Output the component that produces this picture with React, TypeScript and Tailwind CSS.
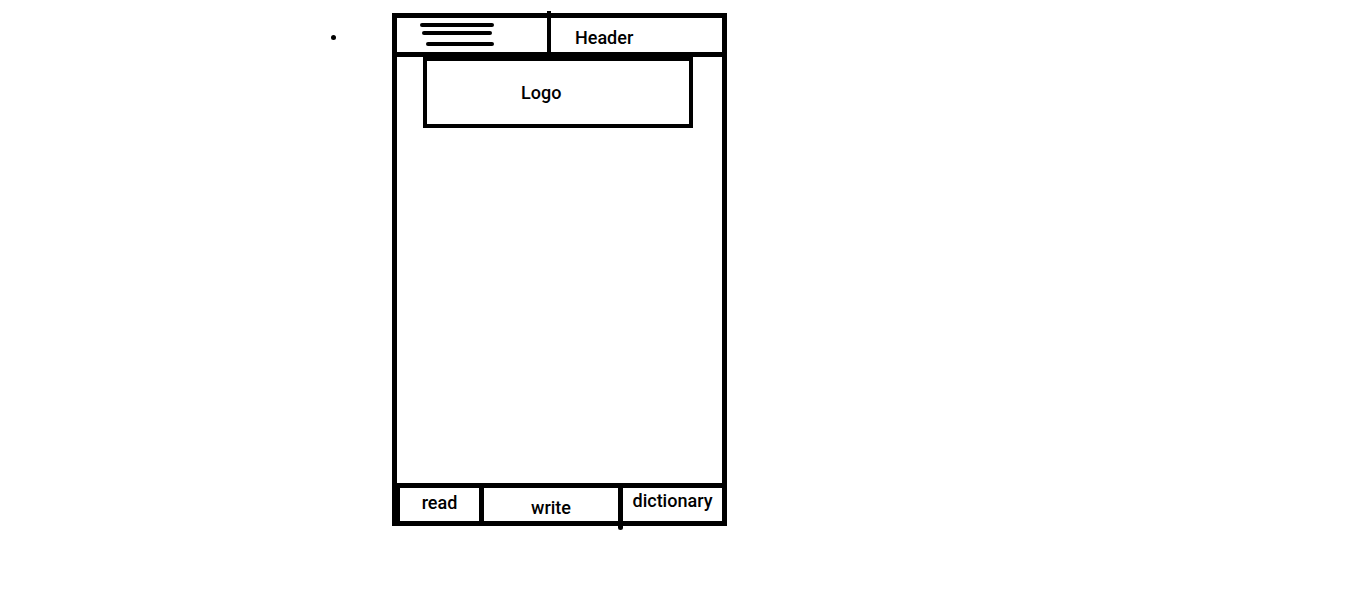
import React from "react";

const NavCell = ({ label, className }: { label: string; className: string }) => (
    <div className={"flex justify-center " + className}>
        <span>{label}</span>
    </div>
);

export default function App() {
    return (
        <div className="h-[612px] w-[1352px] bg-white text-black font-['Roboto',sans-serif] font-medium text-[18px] leading-none">
            <div className="flex pt-[13px]">
                <div className="ml-[331px] mt-[22px] h-[5px] w-[5px] rounded-full bg-black" />

                <div className="ml-[56px] flex h-[513px] w-[335px] flex-col border-[5px] border-black">
                    {/* header */}
                    <div className="flex h-[39px] border-b-[5px] border-black">
                        <div className="w-[150px]">
                            <svg width="80" height="30" viewBox="0 0 80 30" className="ml-[21px] mt-[3px]">
                                <g stroke="black" strokeWidth="4" strokeLinecap="round">
                                    <line x1="4" y1="4" x2="74" y2="4" />
                                    <line x1="6" y1="12" x2="72" y2="12" />
                                    <line x1="10" y1="23" x2="74" y2="23" />
                                </g>
                            </svg>
                        </div>
                        <div className="-mt-[7px] w-[4px] bg-black" />
                        <div className="flex-1 pl-[24px] pt-[11px]">Header</div>
                    </div>

                    {/* body */}
                    <div className="flex-1">
                        <div className="ml-[26px] flex h-[71px] w-[270px] items-center border-4 border-black pl-[94px]">
                            Logo
                        </div>
                    </div>

                    {/* bottom nav */}
                    <div className="flex h-[38px] border-t-[5px] border-black">
                        <NavCell label="read" className="w-[82px] border-l-[3px] border-black pt-[6px]" />
                        <div className="w-[5px] bg-black" />
                        <NavCell label="write" className="w-[134px] pt-[11px]" />
                        <div className="mb-[-9px] w-[5px] rounded-b-full bg-black" />
                        <NavCell label="dictionary" className="flex-1 pt-[4px]" />
                    </div>
                </div>
            </div>
        </div>
    );
}
